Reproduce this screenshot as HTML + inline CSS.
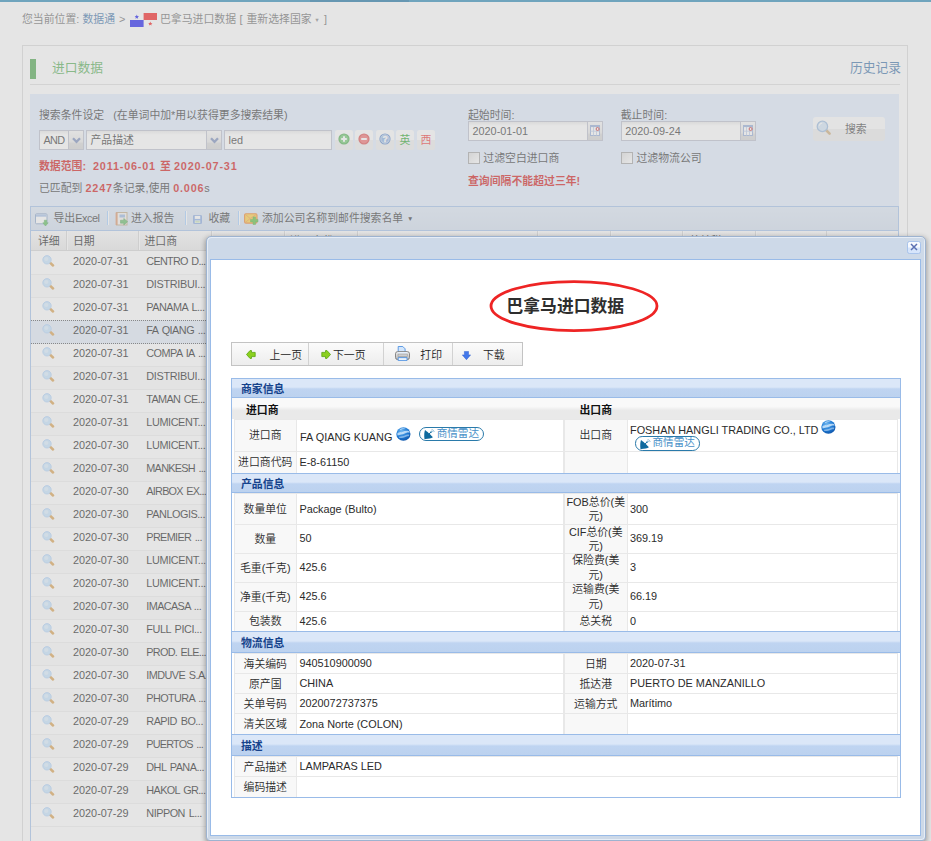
<!DOCTYPE html>
<html lang="zh-CN">
<head>
<meta charset="utf-8">
<title>巴拿马进口数据</title>
<style>
*{box-sizing:border-box;margin:0;padding:0}
html,body{width:931px;height:841px;overflow:hidden;background:#fff}
body{position:relative;font-family:"Liberation Sans","Noto Sans CJK SC",sans-serif;font-size:10.86px;color:#000}
.abs{position:absolute;white-space:nowrap}
.t{position:absolute;white-space:nowrap;height:16px;line-height:16px}
/* ---------- underlying page ---------- */
#topbar{left:0;top:0;width:931px;height:2px;background:#127cae}
#topbar i{position:absolute;left:310px;top:0;width:99px;height:2px;background:#006399}
#crumb{color:#5c5c5c}
#crumb a{color:#2a64a0}
#panel{left:22px;top:45px;width:886px;height:900px;border:1px solid #d6d6d6;background:#fff}
#gbar{left:30px;top:59px;width:6px;height:20px;background:#3a9c3a}
#h1{left:52px;top:58px;height:20px;line-height:20px;font-size:12.75px;color:#46a646}
#hist{left:850px;top:58px;height:20px;line-height:20px;font-size:12.75px;color:#2a64a0}
#rule{left:30px;top:84px;width:870px;height:1px;background:#dadada}
#sp{left:30px;top:94px;width:869px;height:113px;background:#deebfd}
.inp{position:absolute;height:20px;border:1px solid #b5b8c8;background:#fff linear-gradient(#e9e9e9,#fff 4px);line-height:18px;padding-left:3.5px;white-space:nowrap;color:#222}
.trg{position:absolute;height:20px;border:1px solid #b5b8c8;border-left:0;background:linear-gradient(#f6f6f6,#e6e6e6 60%,#d4d4d4 70%,#d0d0d0)}
.trg svg{position:absolute;left:3px;top:6px}
.sbtn{position:absolute;top:130px;width:18px;height:19.5px;border-radius:2.5px;background:linear-gradient(#fcfcfc 50%,#ececec 50%);text-align:center;line-height:19px;font-size:12px}
.sbtn svg{position:absolute;left:3px;top:3.3px}
.red{color:#cc0000;font-weight:bold}
.ls{letter-spacing:.8px}
.cb{position:absolute;width:12px;height:12px;border:1px solid #9a9a9a;background:linear-gradient(135deg,#dcdcdc,#fff)}
#sbtnbig{left:813px;top:117px;width:72px;height:24px;border-radius:3px;background:linear-gradient(#fbfbfb 50%,#eaeaea 50%)}
#tb{left:30px;top:206px;width:869px;height:25px;border:1px solid #99bbe8;border-left-color:#99bbe8;background:linear-gradient(#dae6f5,#cfdcee)}
.tbt{position:absolute;top:210px;height:16px;line-height:16px;white-space:nowrap;color:#222}
.sep{position:absolute;top:211px;width:2px;height:14px;border-left:1px solid #98c8ff;background:#fff}
#gh{left:31px;top:231px;width:868px;height:20px;background:linear-gradient(#f9f9f9,#e6e6e6);border-bottom:1px solid #d0d0d0}
.hc{position:absolute;top:231px;height:19px;border-left:1px solid #fff;border-right:1px solid #d0d0d0}
.ht{position:absolute;top:232.5px;height:16px;line-height:16px;white-space:nowrap;color:#000}
#gl{left:30px;top:231px;width:1px;height:700px;background:#99bbe8}
#gr{left:898px;top:207px;width:1px;height:700px;background:#99bbe8}
.row{position:absolute;left:31px;width:867px;height:23px;border-bottom:1px solid #ededed;border-top:1px solid #fff;background:#fff}
.row.alt{background:#fafafa;border-top-color:#fafafa}
.row.sel{background:#dfe8f6;border-top:1px dotted #444;border-bottom:1px dotted #444;margin-top:-1px;height:24px;padding-top:0}
.row.sel span{margin-top:1px}
.row span{position:absolute;top:-0.2px;height:18px;line-height:18px;white-space:nowrap}
.row .c0{left:11.3px;top:2.9px}
.row .c1{left:42px}
.row .c2{left:115.3px;word-spacing:1.2px}
.mag{display:block}
#mask{left:0;top:0;width:931px;height:841px;background:rgba(204,204,204,.5)}
/* ---------- window ---------- */
#win{left:206px;top:236px;width:720px;height:604.5px;border:1px solid #9db3d0;border-radius:5px 5px 4px 4px;background:#cdd9e8;box-shadow:0 2px 5px 0.5px rgba(0,0,0,.3), inset 1px 1px 0 #e6edf6, inset -1px -1px 0 #e6edf6}
#wbody{left:210px;top:259px;width:711px;height:577px;border:1px solid #99bbe8;background:#fff}
#close{left:907px;top:241px;width:14px;height:13px;border:1px solid #a9c4ec;border-radius:2.5px;background:linear-gradient(#f6f9fe 45%,#d6e5fb 55%)}
#title{left:210.3px;top:294.5px;width:710px;height:24px;line-height:24px;text-align:center;font-size:16.8px;font-weight:bold;color:#2e2e2e}
#btb{left:231px;top:342px;width:292px;height:24px;border:1px solid #c3c3c3;background:linear-gradient(#fbfbfb,#ededed)}
.bsep{position:absolute;top:343px;width:1px;height:22px;background:#d2d2d2}
.bt{font-weight:350;position:absolute;top:347.2px;height:16px;line-height:16px;white-space:nowrap;color:#222}
#tbl{left:230.5px;top:378px;width:670.5px;height:420px;border:1px solid #99bbe8;background:#fff}
.sh{position:absolute;left:231.5px;width:668.5px;background:linear-gradient(#dbe7f8 45%,#bfd4f1 55%,#bcd2ef);border-bottom:1px solid #99bbe8;border-top:1px solid #99bbe8}
.sht{position:absolute;left:241px;height:16px;line-height:16px;font-weight:bold;color:#15428b;white-space:nowrap}
.sub{position:absolute;left:231.5px;width:668.5px;background:linear-gradient(#f9f9f9 40%,#e9e9e9 60%)}
.lc{font-weight:350;position:absolute;background:#f8f8f8;border-right:1px solid #e8e8e8;border-top:1px solid #e8e8e8;border-left:1px solid #e8e8e8;text-align:center;color:#2b2b2b;display:flex;align-items:center;justify-content:center;line-height:14.5px}
.vc{font-weight:350;position:absolute;border-top:1px solid #e8e8e8;border-right:1px solid #e8e8e8;color:#2b2b2b;display:flex;align-items:center;padding-left:2.4px;padding-bottom:1.6px;white-space:nowrap}
.badge{width:65px;height:14.3px;border:1.2px solid #2a7aaa;border-radius:7.2px;background:#fff;color:#4890c8;font-size:10.6px;line-height:11.9px;white-space:nowrap}
.vt{height:16px;line-height:16px;color:#2b2b2b}
</style>
</head>
<body>
<!-- ================= underlying page ================= -->
<div class="abs" id="topbar"><i></i></div>
<div id="crumb">
<span class="t" style="left:22px;top:10.5px">您当前位置:</span>
<a class="t" style="left:82.5px;top:10.5px">数据通</a>
<span class="t" style="left:119px;top:10.5px">&gt;</span>
<svg class="abs" style="left:130px;top:13px" width="27" height="14" viewBox="0 0 27 14"><rect width="27" height="14" fill="#fff"/><rect x="13.6" y="0" width="13.4" height="7" fill="#f40000"/><rect x="0" y="7" width="13.6" height="7" fill="#0000f0"/><path d="M6.8 1.6l.6 1.5 1.6.1-1.2 1 .4 1.6-1.4-.9-1.4.9.4-1.6-1.2-1 1.6-.1z" fill="#0000f0"/><path d="M20.3 8.4l.6 1.5 1.6.1-1.2 1 .4 1.6-1.4-.9-1.4.9.4-1.6-1.2-1 1.6-.1z" fill="#f40000"/></svg>
<span class="t" style="left:160px;top:10.5px">巴拿马进口数据</span>
<span class="t" style="left:239.5px;top:10.5px">[</span>
<span class="t" style="left:246.5px;top:10.5px">重新选择国家</span>
<span class="t" style="left:314.3px;top:11.8px;font-size:5.6px;color:#7a7a7a">▼</span>
<span class="t" style="left:324px;top:10.5px">]</span>
</div>
<div class="abs" id="panel"></div>
<div class="abs" id="gbar"></div>
<div class="abs" id="h1">进口数据</div>
<div class="abs" id="hist">历史记录</div>
<div class="abs" id="rule"></div>
<div class="abs" id="sp"></div>

<span class="t" style="left:39px;top:107px;color:#222">搜索条件设定&nbsp;&nbsp;&nbsp;(在单词中加*用以获得更多搜索结果)</span>
<div class="inp" style="left:39px;top:130px;width:30px;letter-spacing:-.7px">AND</div>
<div class="trg" style="left:69px;top:130px;width:15px"><svg width="9" height="7" viewBox="0 0 9 7"><path d="M1 1.2l3.5 3.6L8 1.2" fill="none" stroke="#6a80b4" stroke-width="2.3"/></svg></div>
<div class="inp" style="left:86px;top:130px;width:121px">产品描述</div>
<div class="trg" style="left:207px;top:130px;width:15px"><svg width="9" height="7" viewBox="0 0 9 7"><path d="M1 1.2l3.5 3.6L8 1.2" fill="none" stroke="#6a80b4" stroke-width="2.3"/></svg></div>
<div class="inp" style="left:224px;top:130px;width:108px">led</div>
<div class="sbtn" style="left:335px"><svg width="12" height="12" viewBox="0 0 12 12"><circle cx="6" cy="6" r="5.6" fill="#3fa43f"/><circle cx="6" cy="6" r="4.4" fill="#62c462"/><path d="M6 3.2v5.6M3.2 6h5.6" stroke="#fff" stroke-width="2"/></svg></div>
<div class="sbtn" style="left:355px"><svg width="12" height="12" viewBox="0 0 12 12"><circle cx="6" cy="6" r="5.6" fill="#d83a3a"/><circle cx="6" cy="6" r="4.4" fill="#f06060"/><path d="M3.2 6h5.6" stroke="#fff" stroke-width="2"/></svg></div>
<div class="sbtn" style="left:376px"><svg width="12" height="12" viewBox="0 0 12 12"><circle cx="6" cy="6" r="5.6" fill="#4d7fc8"/><circle cx="6" cy="6" r="4.2" fill="#7fa8e0" stroke="#d6e4f8" stroke-width=".8"/><text x="6" y="9" font-size="8.5" font-weight="bold" fill="#fff" stroke="#fff" stroke-width=".4" text-anchor="middle" font-family="Liberation Sans,sans-serif">?</text></svg></div>
<div class="sbtn" style="left:396px;color:#0c9a0c;font-size:10.86px;line-height:21.5px">英</div>
<div class="sbtn" style="left:417px;color:#ee1c1c;font-size:10.86px;line-height:21.5px">西</div>
<span class="t red" style="left:39px;top:158px">数据范围:</span><span class="t red ls" style="left:93px;top:158px">2011-06-01</span><span class="t red" style="left:160px;top:158px">至</span><span class="t red ls" style="left:174px;top:158px">2020-07-31</span>
<span class="t" style="left:39px;top:180px;color:#222">已匹配到 <b class="red ls">2247</b>条记录,使用 <b class="red ls">0.006</b>s</span>

<span class="t" style="left:468px;top:107px;color:#222">起始时间:</span>
<div class="inp" style="left:468px;top:121px;width:120px;font-size:10.86px">2020-01-01</div>
<div class="trg" style="left:588px;top:121px;width:15px"><svg style="left:2px;top:3px" width="10" height="11" viewBox="0 0 10 11"><rect x=".5" y=".5" width="9" height="10" fill="#fff" stroke="#8aa4d4"/><rect x=".5" y=".5" width="9" height="1.600" fill="#8aa4d4"/><path d="M3.500 2v8.500M6.500 2v8.500M.5 6.200h9" stroke="#b4c6e6" stroke-width=".9"/><circle cx="7.600" cy="4" r="1.500" fill="#fff" stroke="#c81818" stroke-width="1"/></svg></div>
<div class="cb" style="left:467.8px;top:151.5px"></div>
<span class="t" style="left:483.3px;top:149.5px;color:#222">过滤空白进口商</span>
<span class="t red" style="left:468px;top:172.5px">查询间隔不能超过三年!</span>

<span class="t" style="left:620.7px;top:107px;color:#222">截止时间:</span>
<div class="inp" style="left:620.7px;top:121px;width:120px">2020-09-24</div>
<div class="trg" style="left:740.7px;top:121px;width:15px"><svg style="left:2px;top:3px" width="10" height="11" viewBox="0 0 10 11"><rect x=".5" y=".5" width="9" height="10" fill="#fff" stroke="#8aa4d4"/><rect x=".5" y=".5" width="9" height="1.600" fill="#8aa4d4"/><path d="M3.500 2v8.500M6.500 2v8.500M.5 6.200h9" stroke="#b4c6e6" stroke-width=".9"/><circle cx="7.600" cy="4" r="1.500" fill="#fff" stroke="#c81818" stroke-width="1"/></svg></div>
<div class="cb" style="left:621px;top:151.5px"></div>
<span class="t" style="left:636.5px;top:149.5px;color:#222">过滤物流公司</span>

<div class="abs" id="sbtnbig"></div>
<svg class="abs" style="left:816px;top:120px" width="16" height="16" viewBox="0 0 16 16"><line x1="9.5" y1="9.5" x2="13.6" y2="13.6" stroke="#c9a36b" stroke-width="2.6" stroke-linecap="round"/><circle cx="6.4" cy="6.4" r="5.2" fill="#cfe3f7" stroke="#8fb3dc" stroke-width="1.3"/><path d="M3.2 5.6a3.4 3.4 0 0 1 3-2.6" stroke="#fff" stroke-width="1.1" fill="none"/></svg>
<span class="t" style="left:845px;top:121px;color:#333">搜索</span>

<!-- toolbar -->
<div class="abs" id="tb"></div>
<svg class="abs" style="left:35px;top:212.5px" width="14" height="14" viewBox="0 0 14 14"><rect x=".5" y=".8" width="11.5" height="10" rx="1" fill="#fff" stroke="#7f9cc4"/><rect x="1" y="1.3" width="10.5" height="2.4" fill="#9dbbe6"/><path d="M9.300 7.200h2.400v2.600h1.500L10.500 13 7.800 9.800h1.500z" fill="#4cb848" stroke="#2f9a35" stroke-width=".5"/></svg>
<span class="tbt" style="left:53.5px">导出<span style="letter-spacing:-.45px">Excel</span></span>
<div class="sep" style="left:107px"></div>
<svg class="abs" style="left:114.800px;top:211.800px" width="14" height="14" viewBox="0 0 14 14"><rect x="1.5" y=".5" width="10.5" height="12.5" fill="#f4f1ea" stroke="#b9a07a"/><rect x=".6" y=".5" width="2" height="12.5" fill="#d98a5a"/><rect x="4.5" y="2.5" width="5.5" height="3" fill="#8fb1e0"/><path d="M5.5 8.2h3.3V6.4l3.8 3.3-3.8 3.3v-1.8H5.5z" fill="#54b558" stroke="#2f8a35" stroke-width=".5"/></svg>
<span class="tbt" style="left:131px">进入报告</span>
<div class="sep" style="left:184.5px"></div>
<svg class="abs" style="left:192.500px;top:214.500px" width="9" height="9" viewBox="0 0 9 9"><rect x=".4" y=".4" width="8.200" height="8.200" rx=".8" fill="#7ea4e4" stroke="#6d94d8" stroke-width=".8"/><rect x="1.800" y=".9" width="5.400" height="3" fill="#fff"/><rect x="1.800" y="5.400" width="5.400" height="2.600" fill="#e9f3e2"/><rect x="2.400" y="6.300" width="4.200" height="1" fill="#b4d79c"/></svg>
<span class="tbt" style="left:208.5px">收藏</span>
<div class="sep" style="left:237.6px"></div>
<svg class="abs" style="left:244px;top:212.500px" width="15" height="13" viewBox="0 0 15 13"><rect x=".6" y=".7" width="12.400" height="9.400" rx="1.300" fill="#ffcb2e" stroke="#ee7414" stroke-width="1.100"/><path d="M1.200 1.300l5 4.200-5 4M6.200 5.500l6.200-4.200" fill="none" stroke="#f08a30" stroke-width=".8"/><path d="M8.700 5.300h2.600v-2h0v2.300h2.700v2.600h-2.700v2.700H8.700V8.200H6.200V5.600h2.500z" fill="none"/><path d="M9 3.900h2.500v2.500H14v2.500h-2.500v2.600H9V8.900H6.500V6.400H9z" fill="#4cb82a" stroke="#3a9c20" stroke-width=".5"/></svg>
<span class="tbt" style="left:262px">添加公司名称到邮件搜索名单</span>
<span class="tbt" style="left:407px;font-size:6.5px;top:211px">▼</span>

<!-- grid -->
<div class="abs" id="gh"></div>
<div class="hc" style="left:31px;width:36px;border-left:0"></div>
<div class="hc" style="left:67px;width:72px"></div>
<div class="hc" style="left:139px;width:73px"></div>
<div class="hc" style="left:212px;width:72.5px"></div>
<div class="hc" style="left:284.5px;width:73px"></div>
<div class="hc" style="left:357.5px;width:180px"></div>
<div class="hc" style="left:537.5px;width:73px"></div>
<div class="hc" style="left:610.5px;width:72.5px"></div>
<div class="hc" style="left:683px;width:72.5px"></div>
<div class="hc" style="left:755.5px;width:71px"></div>
<span class="ht" style="left:38px">详细</span>
<span class="ht" style="left:73px">日期</span>
<span class="ht" style="left:144.5px">进口商</span>
<span class="ht" style="left:290px">进口商代码</span>
<span class="ht" style="left:689px">总关税</span>
<div class="row" style="top:251.6px"><span class="c0"><svg class="mag" width="13" height="12" viewBox="0 0 13 12"><line x1="8.300" y1="7.900" x2="11" y2="10.500" stroke="#d6963c" stroke-width="2.500" stroke-linecap="round"/><circle cx="5" cy="4.800" r="4.200" fill="#bfe0fc" stroke="#a4ccf8" stroke-width=".9"/><circle cx="4.300" cy="4" r="2.100" fill="#d6ecff"/></svg></span><span class="c1">2020-07-31</span><span class="c2" style="letter-spacing:-0.724px">CENTRO D...</span></div>
<div class="row alt" style="top:274.6px"><span class="c0"><svg class="mag" width="13" height="12" viewBox="0 0 13 12"><line x1="8.300" y1="7.900" x2="11" y2="10.500" stroke="#d6963c" stroke-width="2.500" stroke-linecap="round"/><circle cx="5" cy="4.800" r="4.200" fill="#bfe0fc" stroke="#a4ccf8" stroke-width=".9"/><circle cx="4.300" cy="4" r="2.100" fill="#d6ecff"/></svg></span><span class="c1">2020-07-31</span><span class="c2" style="letter-spacing:-0.312px">DISTRIBUI...</span></div>
<div class="row" style="top:297.6px"><span class="c0"><svg class="mag" width="13" height="12" viewBox="0 0 13 12"><line x1="8.300" y1="7.900" x2="11" y2="10.500" stroke="#d6963c" stroke-width="2.500" stroke-linecap="round"/><circle cx="5" cy="4.800" r="4.200" fill="#bfe0fc" stroke="#a4ccf8" stroke-width=".9"/><circle cx="4.300" cy="4" r="2.100" fill="#d6ecff"/></svg></span><span class="c1">2020-07-31</span><span class="c2" style="letter-spacing:-0.497px">PANAMA L...</span></div>
<div class="row alt sel" style="top:320.6px"><span class="c0"><svg class="mag" width="13" height="12" viewBox="0 0 13 12"><line x1="8.300" y1="7.900" x2="11" y2="10.500" stroke="#d6963c" stroke-width="2.500" stroke-linecap="round"/><circle cx="5" cy="4.800" r="4.200" fill="#bfe0fc" stroke="#a4ccf8" stroke-width=".9"/><circle cx="4.300" cy="4" r="2.100" fill="#d6ecff"/></svg></span><span class="c1">2020-07-31</span><span class="c2" style="letter-spacing:-0.514px">FA QIANG ...</span></div>
<div class="row" style="top:343.6px"><span class="c0"><svg class="mag" width="13" height="12" viewBox="0 0 13 12"><line x1="8.300" y1="7.900" x2="11" y2="10.500" stroke="#d6963c" stroke-width="2.500" stroke-linecap="round"/><circle cx="5" cy="4.800" r="4.200" fill="#bfe0fc" stroke="#a4ccf8" stroke-width=".9"/><circle cx="4.300" cy="4" r="2.100" fill="#d6ecff"/></svg></span><span class="c1">2020-07-31</span><span class="c2" style="letter-spacing:-0.547px">COMPA IA ...</span></div>
<div class="row alt" style="top:366.6px"><span class="c0"><svg class="mag" width="13" height="12" viewBox="0 0 13 12"><line x1="8.300" y1="7.900" x2="11" y2="10.500" stroke="#d6963c" stroke-width="2.500" stroke-linecap="round"/><circle cx="5" cy="4.800" r="4.200" fill="#bfe0fc" stroke="#a4ccf8" stroke-width=".9"/><circle cx="4.300" cy="4" r="2.100" fill="#d6ecff"/></svg></span><span class="c1">2020-07-31</span><span class="c2" style="letter-spacing:-0.312px">DISTRIBUI...</span></div>
<div class="row" style="top:389.6px"><span class="c0"><svg class="mag" width="13" height="12" viewBox="0 0 13 12"><line x1="8.300" y1="7.900" x2="11" y2="10.500" stroke="#d6963c" stroke-width="2.500" stroke-linecap="round"/><circle cx="5" cy="4.800" r="4.200" fill="#bfe0fc" stroke="#a4ccf8" stroke-width=".9"/><circle cx="4.300" cy="4" r="2.100" fill="#d6ecff"/></svg></span><span class="c1">2020-07-31</span><span class="c2" style="letter-spacing:-0.66px">TAMAN CE...</span></div>
<div class="row alt" style="top:412.6px"><span class="c0"><svg class="mag" width="13" height="12" viewBox="0 0 13 12"><line x1="8.300" y1="7.900" x2="11" y2="10.500" stroke="#d6963c" stroke-width="2.500" stroke-linecap="round"/><circle cx="5" cy="4.800" r="4.200" fill="#bfe0fc" stroke="#a4ccf8" stroke-width=".9"/><circle cx="4.300" cy="4" r="2.100" fill="#d6ecff"/></svg></span><span class="c1">2020-07-31</span><span class="c2" style="letter-spacing:-0.396px">LUMICENT...</span></div>
<div class="row" style="top:435.6px"><span class="c0"><svg class="mag" width="13" height="12" viewBox="0 0 13 12"><line x1="8.300" y1="7.900" x2="11" y2="10.500" stroke="#d6963c" stroke-width="2.500" stroke-linecap="round"/><circle cx="5" cy="4.800" r="4.200" fill="#bfe0fc" stroke="#a4ccf8" stroke-width=".9"/><circle cx="4.300" cy="4" r="2.100" fill="#d6ecff"/></svg></span><span class="c1">2020-07-30</span><span class="c2" style="letter-spacing:-0.396px">LUMICENT...</span></div>
<div class="row alt" style="top:458.6px"><span class="c0"><svg class="mag" width="13" height="12" viewBox="0 0 13 12"><line x1="8.300" y1="7.900" x2="11" y2="10.500" stroke="#d6963c" stroke-width="2.500" stroke-linecap="round"/><circle cx="5" cy="4.800" r="4.200" fill="#bfe0fc" stroke="#a4ccf8" stroke-width=".9"/><circle cx="4.300" cy="4" r="2.100" fill="#d6ecff"/></svg></span><span class="c1">2020-07-30</span><span class="c2" style="letter-spacing:-0.726px">MANKESH ...</span></div>
<div class="row" style="top:481.6px"><span class="c0"><svg class="mag" width="13" height="12" viewBox="0 0 13 12"><line x1="8.300" y1="7.900" x2="11" y2="10.500" stroke="#d6963c" stroke-width="2.500" stroke-linecap="round"/><circle cx="5" cy="4.800" r="4.200" fill="#bfe0fc" stroke="#a4ccf8" stroke-width=".9"/><circle cx="4.300" cy="4" r="2.100" fill="#d6ecff"/></svg></span><span class="c1">2020-07-30</span><span class="c2" style="letter-spacing:-0.758px">AIRBOX EX...</span></div>
<div class="row alt" style="top:504.6px"><span class="c0"><svg class="mag" width="13" height="12" viewBox="0 0 13 12"><line x1="8.300" y1="7.900" x2="11" y2="10.500" stroke="#d6963c" stroke-width="2.500" stroke-linecap="round"/><circle cx="5" cy="4.800" r="4.200" fill="#bfe0fc" stroke="#a4ccf8" stroke-width=".9"/><circle cx="4.300" cy="4" r="2.100" fill="#d6ecff"/></svg></span><span class="c1">2020-07-30</span><span class="c2" style="letter-spacing:-0.462px">PANLOGIS...</span></div>
<div class="row" style="top:527.6px"><span class="c0"><svg class="mag" width="13" height="12" viewBox="0 0 13 12"><line x1="8.300" y1="7.900" x2="11" y2="10.500" stroke="#d6963c" stroke-width="2.500" stroke-linecap="round"/><circle cx="5" cy="4.800" r="4.200" fill="#bfe0fc" stroke="#a4ccf8" stroke-width=".9"/><circle cx="4.300" cy="4" r="2.100" fill="#d6ecff"/></svg></span><span class="c1">2020-07-30</span><span class="c2" style="letter-spacing:-0.659px">PREMIER ...</span></div>
<div class="row alt" style="top:550.6px"><span class="c0"><svg class="mag" width="13" height="12" viewBox="0 0 13 12"><line x1="8.300" y1="7.900" x2="11" y2="10.500" stroke="#d6963c" stroke-width="2.500" stroke-linecap="round"/><circle cx="5" cy="4.800" r="4.200" fill="#bfe0fc" stroke="#a4ccf8" stroke-width=".9"/><circle cx="4.300" cy="4" r="2.100" fill="#d6ecff"/></svg></span><span class="c1">2020-07-30</span><span class="c2" style="letter-spacing:-0.36px">LUMICENT...</span></div>
<div class="row" style="top:573.6px"><span class="c0"><svg class="mag" width="13" height="12" viewBox="0 0 13 12"><line x1="8.300" y1="7.900" x2="11" y2="10.500" stroke="#d6963c" stroke-width="2.500" stroke-linecap="round"/><circle cx="5" cy="4.800" r="4.200" fill="#bfe0fc" stroke="#a4ccf8" stroke-width=".9"/><circle cx="4.300" cy="4" r="2.100" fill="#d6ecff"/></svg></span><span class="c1">2020-07-30</span><span class="c2" style="letter-spacing:-0.36px">LUMICENT...</span></div>
<div class="row alt" style="top:596.6px"><span class="c0"><svg class="mag" width="13" height="12" viewBox="0 0 13 12"><line x1="8.300" y1="7.900" x2="11" y2="10.500" stroke="#d6963c" stroke-width="2.500" stroke-linecap="round"/><circle cx="5" cy="4.800" r="4.200" fill="#bfe0fc" stroke="#a4ccf8" stroke-width=".9"/><circle cx="4.300" cy="4" r="2.100" fill="#d6ecff"/></svg></span><span class="c1">2020-07-30</span><span class="c2" style="letter-spacing:-0.615px">IMACASA ...</span></div>
<div class="row" style="top:619.6px"><span class="c0"><svg class="mag" width="13" height="12" viewBox="0 0 13 12"><line x1="8.300" y1="7.900" x2="11" y2="10.500" stroke="#d6963c" stroke-width="2.500" stroke-linecap="round"/><circle cx="5" cy="4.800" r="4.200" fill="#bfe0fc" stroke="#a4ccf8" stroke-width=".9"/><circle cx="4.300" cy="4" r="2.100" fill="#d6ecff"/></svg></span><span class="c1">2020-07-30</span><span class="c2" style="letter-spacing:-0.421px">FULL PICI...</span></div>
<div class="row alt" style="top:642.6px"><span class="c0"><svg class="mag" width="13" height="12" viewBox="0 0 13 12"><line x1="8.300" y1="7.900" x2="11" y2="10.500" stroke="#d6963c" stroke-width="2.500" stroke-linecap="round"/><circle cx="5" cy="4.800" r="4.200" fill="#bfe0fc" stroke="#a4ccf8" stroke-width=".9"/><circle cx="4.300" cy="4" r="2.100" fill="#d6ecff"/></svg></span><span class="c1">2020-07-30</span><span class="c2" style="letter-spacing:-0.732px">PROD. ELE...</span></div>
<div class="row" style="top:665.6px"><span class="c0"><svg class="mag" width="13" height="12" viewBox="0 0 13 12"><line x1="8.300" y1="7.900" x2="11" y2="10.500" stroke="#d6963c" stroke-width="2.500" stroke-linecap="round"/><circle cx="5" cy="4.800" r="4.200" fill="#bfe0fc" stroke="#a4ccf8" stroke-width=".9"/><circle cx="4.300" cy="4" r="2.100" fill="#d6ecff"/></svg></span><span class="c1">2020-07-30</span><span class="c2" style="letter-spacing:-0.563px">IMDUVE S.A...</span></div>
<div class="row alt" style="top:688.6px"><span class="c0"><svg class="mag" width="13" height="12" viewBox="0 0 13 12"><line x1="8.300" y1="7.900" x2="11" y2="10.500" stroke="#d6963c" stroke-width="2.500" stroke-linecap="round"/><circle cx="5" cy="4.800" r="4.200" fill="#bfe0fc" stroke="#a4ccf8" stroke-width=".9"/><circle cx="4.300" cy="4" r="2.100" fill="#d6ecff"/></svg></span><span class="c1">2020-07-30</span><span class="c2" style="letter-spacing:-0.606px">PHOTURA ...</span></div>
<div class="row" style="top:711.6px"><span class="c0"><svg class="mag" width="13" height="12" viewBox="0 0 13 12"><line x1="8.300" y1="7.900" x2="11" y2="10.500" stroke="#d6963c" stroke-width="2.500" stroke-linecap="round"/><circle cx="5" cy="4.800" r="4.200" fill="#bfe0fc" stroke="#a4ccf8" stroke-width=".9"/><circle cx="4.300" cy="4" r="2.100" fill="#d6ecff"/></svg></span><span class="c1">2020-07-29</span><span class="c2" style="letter-spacing:-0.505px">RAPID BO...</span></div>
<div class="row alt" style="top:734.6px"><span class="c0"><svg class="mag" width="13" height="12" viewBox="0 0 13 12"><line x1="8.300" y1="7.900" x2="11" y2="10.500" stroke="#d6963c" stroke-width="2.500" stroke-linecap="round"/><circle cx="5" cy="4.800" r="4.200" fill="#bfe0fc" stroke="#a4ccf8" stroke-width=".9"/><circle cx="4.300" cy="4" r="2.100" fill="#d6ecff"/></svg></span><span class="c1">2020-07-29</span><span class="c2" style="letter-spacing:-0.798px">PUERTOS ...</span></div>
<div class="row" style="top:757.6px"><span class="c0"><svg class="mag" width="13" height="12" viewBox="0 0 13 12"><line x1="8.300" y1="7.900" x2="11" y2="10.500" stroke="#d6963c" stroke-width="2.500" stroke-linecap="round"/><circle cx="5" cy="4.800" r="4.200" fill="#bfe0fc" stroke="#a4ccf8" stroke-width=".9"/><circle cx="4.300" cy="4" r="2.100" fill="#d6ecff"/></svg></span><span class="c1">2020-07-29</span><span class="c2" style="letter-spacing:-0.524px">DHL PANA...</span></div>
<div class="row alt" style="top:780.6px"><span class="c0"><svg class="mag" width="13" height="12" viewBox="0 0 13 12"><line x1="8.300" y1="7.900" x2="11" y2="10.500" stroke="#d6963c" stroke-width="2.500" stroke-linecap="round"/><circle cx="5" cy="4.800" r="4.200" fill="#bfe0fc" stroke="#a4ccf8" stroke-width=".9"/><circle cx="4.300" cy="4" r="2.100" fill="#d6ecff"/></svg></span><span class="c1">2020-07-29</span><span class="c2" style="letter-spacing:-0.626px">HAKOL GR...</span></div>
<div class="row" style="top:803.6px"><span class="c0"><svg class="mag" width="13" height="12" viewBox="0 0 13 12"><line x1="8.300" y1="7.900" x2="11" y2="10.500" stroke="#d6963c" stroke-width="2.500" stroke-linecap="round"/><circle cx="5" cy="4.800" r="4.200" fill="#bfe0fc" stroke="#a4ccf8" stroke-width=".9"/><circle cx="4.300" cy="4" r="2.100" fill="#d6ecff"/></svg></span><span class="c1">2020-07-29</span><span class="c2" style="letter-spacing:-0.496px">NIPPON L...</span></div>
<div class="abs" id="gl"></div>
<div class="abs" id="gr"></div>

<!-- ================= mask ================= -->
<div class="abs" id="mask"></div>

<!-- ================= window ================= -->
<div class="abs" id="win"></div>
<div class="abs" id="wbody"></div>
<div class="abs" id="close"><svg style="position:absolute;left:2px;top:.8px" width="8" height="8" viewBox="0 0 8 8"><path d="M1 1l6 6M7 1L1 7" stroke="#5b70b2" stroke-width="1.5"/></svg></div>

<div class="abs" id="title">巴拿马进口数据</div>
<svg class="abs" style="left:486px;top:277px" width="176" height="58" viewBox="0 0 176 58"><ellipse cx="88" cy="29.100" rx="83" ry="24.500" fill="none" stroke="#ee2424" stroke-width="2.800"/></svg>

<div class="abs" id="btb"></div>
<div class="bsep" style="left:308px"></div>
<div class="bsep" style="left:383.4px"></div>
<div class="bsep" style="left:452.2px"></div>
<svg class="abs" style="left:245.800px;top:349.500px" width="10" height="9" viewBox="0 0 10 9"><path d="M.5 4.500L4 .6h1.500v1.800h3.700v4.200H5.500v1.800H4z" fill="#8bd01e" stroke="#58a60f" stroke-width=".8" stroke-linejoin="round"/></svg>
<span class="bt" style="left:269.5px">上一页</span>
<svg class="abs" style="left:320.500px;top:349.500px" width="10" height="9" viewBox="0 0 10 9"><path d="M9.500 4.500L6 .6H4.500v1.800H.8v4.200h3.700v1.800H6z" fill="#8bd01e" stroke="#58a60f" stroke-width=".8" stroke-linejoin="round"/></svg>
<span class="bt" style="left:333px">下一页</span>
<svg class="abs" style="left:395px;top:345.900px" width="15" height="15" viewBox="0 0 15 15"><defs><linearGradient id="pg" x1="0" y1="0" x2="0" y2="1"><stop offset="0" stop-color="#f4f4f4"/><stop offset="1" stop-color="#b4b4b4"/></linearGradient></defs><path d="M3.200 .5h4.600l2.300 2.300V7H3.200z" fill="#d3e6fb" stroke="#4f92e2" stroke-width=".9" stroke-linejoin="round"/><rect x=".5" y="5.600" width="14" height="8" rx="2.200" fill="url(#pg)" stroke="#7c7c7c" stroke-width=".9"/><rect x="3.200" y="6" width="8.800" height="1.800" fill="#e6f0fc"/><rect x="3" y="8" width="9.200" height="2.400" fill="#cfcfcf" stroke="#8c8c8c" stroke-width=".5"/><path d="M3.200 11.600h8.800v3H3.200z" fill="#e8f2fd" stroke="#4f92e2" stroke-width=".9"/></svg>
<span class="bt" style="left:420.3px">打印</span>
<svg class="abs" style="left:461.500px;top:350.500px" width="9" height="9" viewBox="0 0 9 9"><path d="M2.400 .4h4.100v3.500h2.100L4.450 8.700 .3 3.900h2.100z" fill="#4378ea" stroke="#2c5fd0" stroke-width=".5" stroke-linejoin="round"/></svg>
<span class="bt" style="left:483px">下载</span>

<div class="abs" id="tbl"></div>
<div class="sh" style="top:378px;height:20px"></div><span class="sht" style="top:380.9px">商家信息</span>
<div class="sub" style="top:398px;height:20.5px"></div><span class="abs" style="left:246px;top:401.5px;height:16px;line-height:16px;font-weight:bold;color:#111">进口商</span><span class="abs" style="left:579.5px;top:401.5px;height:16px;line-height:16px;font-weight:bold;color:#111">出口商</span>
<div class="lc" style="left:233.5px;top:418.5px;width:63.5px;height:33.3px">进口商</div><div class="vc" style="left:297.0px;top:418.5px;width:267.0px;height:33.3px"></div><div class="lc" style="left:564px;top:418.5px;width:63.5px;height:33.3px">出口商</div><div class="vc" style="left:627.5px;top:418.5px;width:270.5px;height:33.3px"></div>
<span class="abs vt" style="left:300px;top:429px">FA QIANG KUANG</span><svg class="abs" style="left:396px;top:426.7px" width="15" height="14" viewBox="0 0 15 14"><defs><radialGradient id="gg1" cx=".38" cy=".3" r=".8"><stop offset="0" stop-color="#6fb6f0"/><stop offset=".55" stop-color="#1f7ad4"/><stop offset="1" stop-color="#0b4da0"/></radialGradient></defs><ellipse cx="7.4" cy="7" rx="7.1" ry="6.8" fill="url(#gg1)"/><path d="M1.200 6.400c2-1.600 3.800-.6 5.600-1.600 1.800-1 3.800-1.600 6.400-.6l.6 1.400c-2.400-.6-4 .2-5.600 1.200-1.800 1-4 .6-6.600 1.800z" fill="#dff0fd" opacity=".75"/><path d="M2.600 9.800c2.400-.8 4.400-.4 6.200-1.400 1.400-.8 3-1 4.600-.6l-.6 1.400c-2-.2-3.200.6-4.600 1.200-1.400.6-3 .4-4.800.6z" fill="#cfe6fa" opacity=".55"/><path d="M4 2.200c1.600-1 3.600-1.200 5.400-.6-1.600.2-3.400.6-5 1.600z" fill="#e8f4fe" opacity=".7"/></svg><div class="badge" style="position:absolute;left:419.2px;top:426.7px"><svg style="position:absolute;left:3.800px;top:1.200px" width="12" height="11" viewBox="0 0 12 11"><path d="M1 1C2.200 1.600 7.400 6.400 8.900 8.300 7.400 9.500 3 10.100 .5 9.900 0 7.200 .1 3.400 1 1z" fill="#0f6a9e"/><path d="M4.600 5.200L7 3.200" stroke="#0f6a9e" stroke-width="1"/><circle cx="7.100" cy="3.100" r=".8" fill="#1c74a6"/><path d="M7.600 .6c1.400 0 2.400 1 2.600 2.400M7.400 1.800c.8 0 1.400 .6 1.600 1.300" stroke="#7db2d2" stroke-width=".8" fill="none"/></svg><span style="position:absolute;left:16.500px;top:0">商情雷达</span></div>
<span class="abs vt" style="left:630px;top:422px">FOSHAN HANGLI TRADING CO., LTD</span><svg class="abs" style="left:821px;top:420px" width="15" height="14" viewBox="0 0 15 14"><defs><radialGradient id="gg2" cx=".38" cy=".3" r=".8"><stop offset="0" stop-color="#6fb6f0"/><stop offset=".55" stop-color="#1f7ad4"/><stop offset="1" stop-color="#0b4da0"/></radialGradient></defs><ellipse cx="7.4" cy="7" rx="7.1" ry="6.8" fill="url(#gg2)"/><path d="M1.200 6.400c2-1.600 3.800-.6 5.600-1.600 1.800-1 3.800-1.600 6.400-.6l.6 1.400c-2.400-.6-4 .2-5.600 1.200-1.800 1-4 .6-6.600 1.800z" fill="#dff0fd" opacity=".75"/><path d="M2.600 9.800c2.400-.8 4.400-.4 6.200-1.400 1.400-.8 3-1 4.600-.6l-.6 1.400c-2-.2-3.200.6-4.600 1.200-1.400.6-3 .4-4.800.6z" fill="#cfe6fa" opacity=".55"/><path d="M4 2.200c1.600-1 3.600-1.200 5.400-.6-1.600.2-3.400.6-5 1.600z" fill="#e8f4fe" opacity=".7"/></svg><div class="badge" style="position:absolute;left:635px;top:436.4px"><svg style="position:absolute;left:3.800px;top:1.200px" width="12" height="11" viewBox="0 0 12 11"><path d="M1 1C2.200 1.600 7.400 6.400 8.900 8.300 7.400 9.500 3 10.100 .5 9.900 0 7.200 .1 3.400 1 1z" fill="#0f6a9e"/><path d="M4.600 5.200L7 3.200" stroke="#0f6a9e" stroke-width="1"/><circle cx="7.100" cy="3.100" r=".8" fill="#1c74a6"/><path d="M7.600 .6c1.400 0 2.400 1 2.600 2.400M7.400 1.800c.8 0 1.400 .6 1.600 1.300" stroke="#7db2d2" stroke-width=".8" fill="none"/></svg><span style="position:absolute;left:16.500px;top:0">商情雷达</span></div>
<div class="lc" style="left:233.5px;top:451.2px;width:63.5px;height:21.4px">进口商代码</div><div class="vc" style="left:297.0px;top:451.2px;width:267.0px;height:21.4px">E-8-61150</div><div class="lc" style="left:564px;top:451.2px;width:63.5px;height:21.4px"></div><div class="vc" style="left:627.5px;top:451.2px;width:270.5px;height:21.4px"></div>
<div class="sh" style="top:472.5px;height:20.80000000000001px"></div><span class="sht" style="top:475.8px">产品信息</span>
<div class="lc" style="left:233.5px;top:493.3px;width:63.5px;height:31.1px">数量单位</div><div class="vc" style="left:297.0px;top:493.3px;width:267.0px;height:31.1px">Package (Bulto)</div><div class="lc" style="left:564px;top:493.3px;width:63.5px;height:31.1px">FOB总价(美<br>元)</div><div class="vc" style="left:627.5px;top:493.3px;width:270.5px;height:31.1px">300</div>
<div class="lc" style="left:233.5px;top:523.8px;width:63.5px;height:29.6px">数量</div><div class="vc" style="left:297.0px;top:523.8px;width:267.0px;height:29.6px">50</div><div class="lc" style="left:564px;top:523.8px;width:63.5px;height:29.6px">CIF总价(美<br>元)</div><div class="vc" style="left:627.5px;top:523.8px;width:270.5px;height:29.6px">369.19</div>
<div class="lc" style="left:233.5px;top:552.8px;width:63.5px;height:29.3px">毛重(千克)</div><div class="vc" style="left:297.0px;top:552.8px;width:267.0px;height:29.3px">425.6</div><div class="lc" style="left:564px;top:552.8px;width:63.5px;height:29.3px">保险费(美<br>元)</div><div class="vc" style="left:627.5px;top:552.8px;width:270.5px;height:29.3px">3</div>
<div class="lc" style="left:233.5px;top:581.5px;width:63.5px;height:29.6px">净重(千克)</div><div class="vc" style="left:297.0px;top:581.5px;width:267.0px;height:29.6px">425.6</div><div class="lc" style="left:564px;top:581.5px;width:63.5px;height:29.6px">运输费(美<br>元)</div><div class="vc" style="left:627.5px;top:581.5px;width:270.5px;height:29.6px">66.19</div>
<div class="lc" style="left:233.5px;top:610.5px;width:63.5px;height:21.4px">包装数</div><div class="vc" style="left:297.0px;top:610.5px;width:267.0px;height:21.4px">425.6</div><div class="lc" style="left:564px;top:610.5px;width:63.5px;height:21.4px">总关税</div><div class="vc" style="left:627.5px;top:610.5px;width:270.5px;height:21.4px">0</div>
<div class="sh" style="top:631.3px;height:21.700000000000045px"></div><span class="sht" style="top:635.0px">物流信息</span>
<div class="lc" style="left:233.5px;top:653px;width:63.5px;height:20.8px">海关编码</div><div class="vc" style="left:297.0px;top:653px;width:267.0px;height:20.8px">940510900090</div><div class="lc" style="left:564px;top:653px;width:63.5px;height:20.8px">日期</div><div class="vc" style="left:627.5px;top:653px;width:270.5px;height:20.8px">2020-07-31</div>
<div class="lc" style="left:233.5px;top:673.2px;width:63.5px;height:20.6px">原产国</div><div class="vc" style="left:297.0px;top:673.2px;width:267.0px;height:20.6px">CHINA</div><div class="lc" style="left:564px;top:673.2px;width:63.5px;height:20.6px">抵达港</div><div class="vc" style="left:627.5px;top:673.2px;width:270.5px;height:20.6px">PUERTO DE MANZANILLO</div>
<div class="lc" style="left:233.5px;top:693.2px;width:63.5px;height:20.7px">关单号码</div><div class="vc" style="left:297.0px;top:693.2px;width:267.0px;height:20.7px">2020072737375</div><div class="lc" style="left:564px;top:693.2px;width:63.5px;height:20.7px">运输方式</div><div class="vc" style="left:627.5px;top:693.2px;width:270.5px;height:20.7px">Marítimo</div>
<div class="lc" style="left:233.5px;top:713.3px;width:63.5px;height:21.1px">清关区域</div><div class="vc" style="left:297.0px;top:713.3px;width:267.0px;height:21.1px">Zona Norte (COLON)</div><div class="lc" style="left:564px;top:713.3px;width:63.5px;height:21.1px"></div><div class="vc" style="left:627.5px;top:713.3px;width:270.5px;height:21.1px"></div>
<div class="sh" style="top:733.8px;height:22.0px"></div><span class="sht" style="top:737.7px">描述</span>
<div class="lc" style="left:233.5px;top:755.8px;width:63.5px;height:21.1px">产品描述</div><div class="vc" style="left:297.0px;top:755.8px;width:601.0px;height:21.1px">LAMPARAS LED</div>
<div class="lc" style="left:233.5px;top:776.3px;width:63.5px;height:20.7px">编码描述</div><div class="vc" style="left:297.0px;top:776.3px;width:601.0px;height:20.7px"></div>
</body>
</html>
